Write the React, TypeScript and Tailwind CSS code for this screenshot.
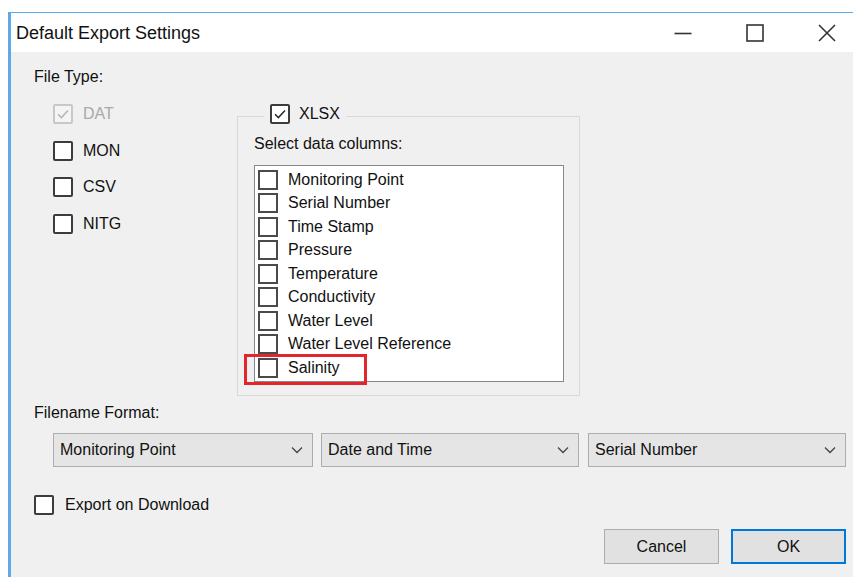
import React from 'react';

const dataColumns = [
  'Monitoring Point',
  'Serial Number',
  'Time Stamp',
  'Pressure',
  'Temperature',
  'Conductivity',
  'Water Level',
  'Water Level Reference',
  'Salinity',
];

const fileTypes = [
  { label: 'DAT', checked: true, disabled: true },
  { label: 'MON', checked: false, disabled: false },
  { label: 'CSV', checked: false, disabled: false },
  { label: 'NITG', checked: false, disabled: false },
];

const Tick = ({ color }: { color: string }) => (
  <svg viewBox="0 0 16 16" className="w-full h-full">
    <path d="M3 8.2 L6.4 11.6 L13 4.6" fill="none" stroke={color} strokeWidth="1.5" />
  </svg>
);

const CheckBox = ({ checked = false, disabled = false }: { checked?: boolean; disabled?: boolean }) => (
  <span
    className={`flex-shrink-0 w-[20px] h-[20px] border-2 rounded-[2px] ${
      disabled ? 'border-[#c8c8c8] bg-[#f4f4f4]' : 'border-[#3c3c3c] bg-white'
    }`}
  >
    {checked && <Tick color={disabled ? '#b4b4b4' : '#2a2a2a'} />}
  </span>
);

const Chevron = () => (
  <svg viewBox="0 0 12 8" className="w-[12px] h-[8px]">
    <path d="M1 1.5 L6 6.5 L11 1.5" fill="none" stroke="#444" strokeWidth="1.3" />
  </svg>
);

const Combo = ({ value, width }: { value: string; width: string }) => (
  <div className={`${width} h-[34px] flex items-center justify-between pl-[6px] pr-[9px] bg-[#e5e5e5] border border-[#adadad]`}>
    <span>{value}</span>
    <Chevron />
  </div>
);

export default function App() {
  return (
    <div className="w-[853px] h-[577px] overflow-hidden bg-white font-['Liberation_Sans',Arial,sans-serif] text-[16px] leading-[20px] text-[#111]">
      <div className="ml-[8px] mt-[12px] w-[855px] h-[565px] flex flex-col border-l-[3px] border-t border-[#62a8e6]">
        {/* title bar */}
        <div className="h-[39px] flex items-center bg-white">
          <span className="pl-[5px] text-[18px]">Default Export Settings</span>
          <div className="ml-auto flex h-full">
            <div className="w-[72px] flex items-center justify-center">
              <svg viewBox="0 0 18 18" className="w-[18px] h-[18px]">
                <path d="M0.5 9.5 H17.5" stroke="#333" strokeWidth="1.6" />
              </svg>
            </div>
            <div className="w-[72px] flex items-center justify-center">
              <svg viewBox="0 0 18 18" className="w-[18px] h-[18px]">
                <rect x="1" y="1" width="16" height="16" fill="none" stroke="#333" strokeWidth="1.6" />
              </svg>
            </div>
            <div className="w-[72px] flex items-center justify-center">
              <svg viewBox="0 0 18 18" className="w-[18px] h-[18px]">
                <path d="M1 1 L17 17 M17 1 L1 17" stroke="#333" strokeWidth="1.6" />
              </svg>
            </div>
          </div>
        </div>

        {/* dialog body */}
        <div className="flex-1 bg-[#f0f0f0] pl-[23px] pr-[17px] pt-[15px]">
          <div>File Type:</div>

          <div className="flex mt-[9px]">
            <div className="w-[203px] pl-[19px]">
              {fileTypes.map(ft => (
                <div key={ft.label} className="h-[36.5px] flex items-center gap-[10px]">
                  <CheckBox checked={ft.checked} disabled={ft.disabled} />
                  <span className={ft.disabled ? 'text-[#a8a8a8]' : ''}>{ft.label}</span>
                </div>
              ))}
            </div>

            <fieldset className="mt-[8px] w-[343px] border border-[#d9d9d9] pl-[16px] pb-[13px]">
              <legend className="ml-[10px] px-[6px]">
                <span className="inline-flex items-center gap-[9px]">
                  <CheckBox checked />
                  <span>XLSX</span>
                </span>
              </legend>
              <div className="mt-[5px]">Select data columns:</div>
              <div className="relative mt-[11px] w-[310px] h-[217px] border border-[#828790] bg-white pt-[2px] pl-[3px]">
                {dataColumns.map(col => (
                  <div key={col} className="h-[23.5px] flex items-center gap-[10px]">
                    <span className="w-[20px] h-[20px] border-2 border-[#4a4a4a] bg-white" />
                    <span>{col}</span>
                  </div>
                ))}
                <div className="absolute left-[-11px] top-[188px] w-[123px] h-[31px] border-[3px] border-[#e3262b]" />
              </div>
            </fieldset>
          </div>

          <div className="mt-[7px]">Filename Format:</div>

          <div className="mt-[10px] ml-[19px] flex">
            <Combo value="Monitoring Point" width="w-[260px]" />
            <div className="ml-[8px]">
              <Combo value="Date and Time" width="w-[258px]" />
            </div>
            <div className="ml-[9px]">
              <Combo value="Serial Number" width="w-[258px]" />
            </div>
          </div>

          <div className="mt-[28px] flex items-center gap-[11px]">
            <CheckBox />
            <span>Export on Download</span>
          </div>

          <div className="mt-[14px] flex justify-end gap-[12px]">
            <button className="w-[115px] h-[35px] bg-[#e1e1e1] border border-[#adadad]">Cancel</button>
            <button className="w-[115px] h-[35px] bg-[#e1e1e1] border-2 border-[#0078d7]">OK</button>
          </div>
        </div>
      </div>
    </div>
  );
}
